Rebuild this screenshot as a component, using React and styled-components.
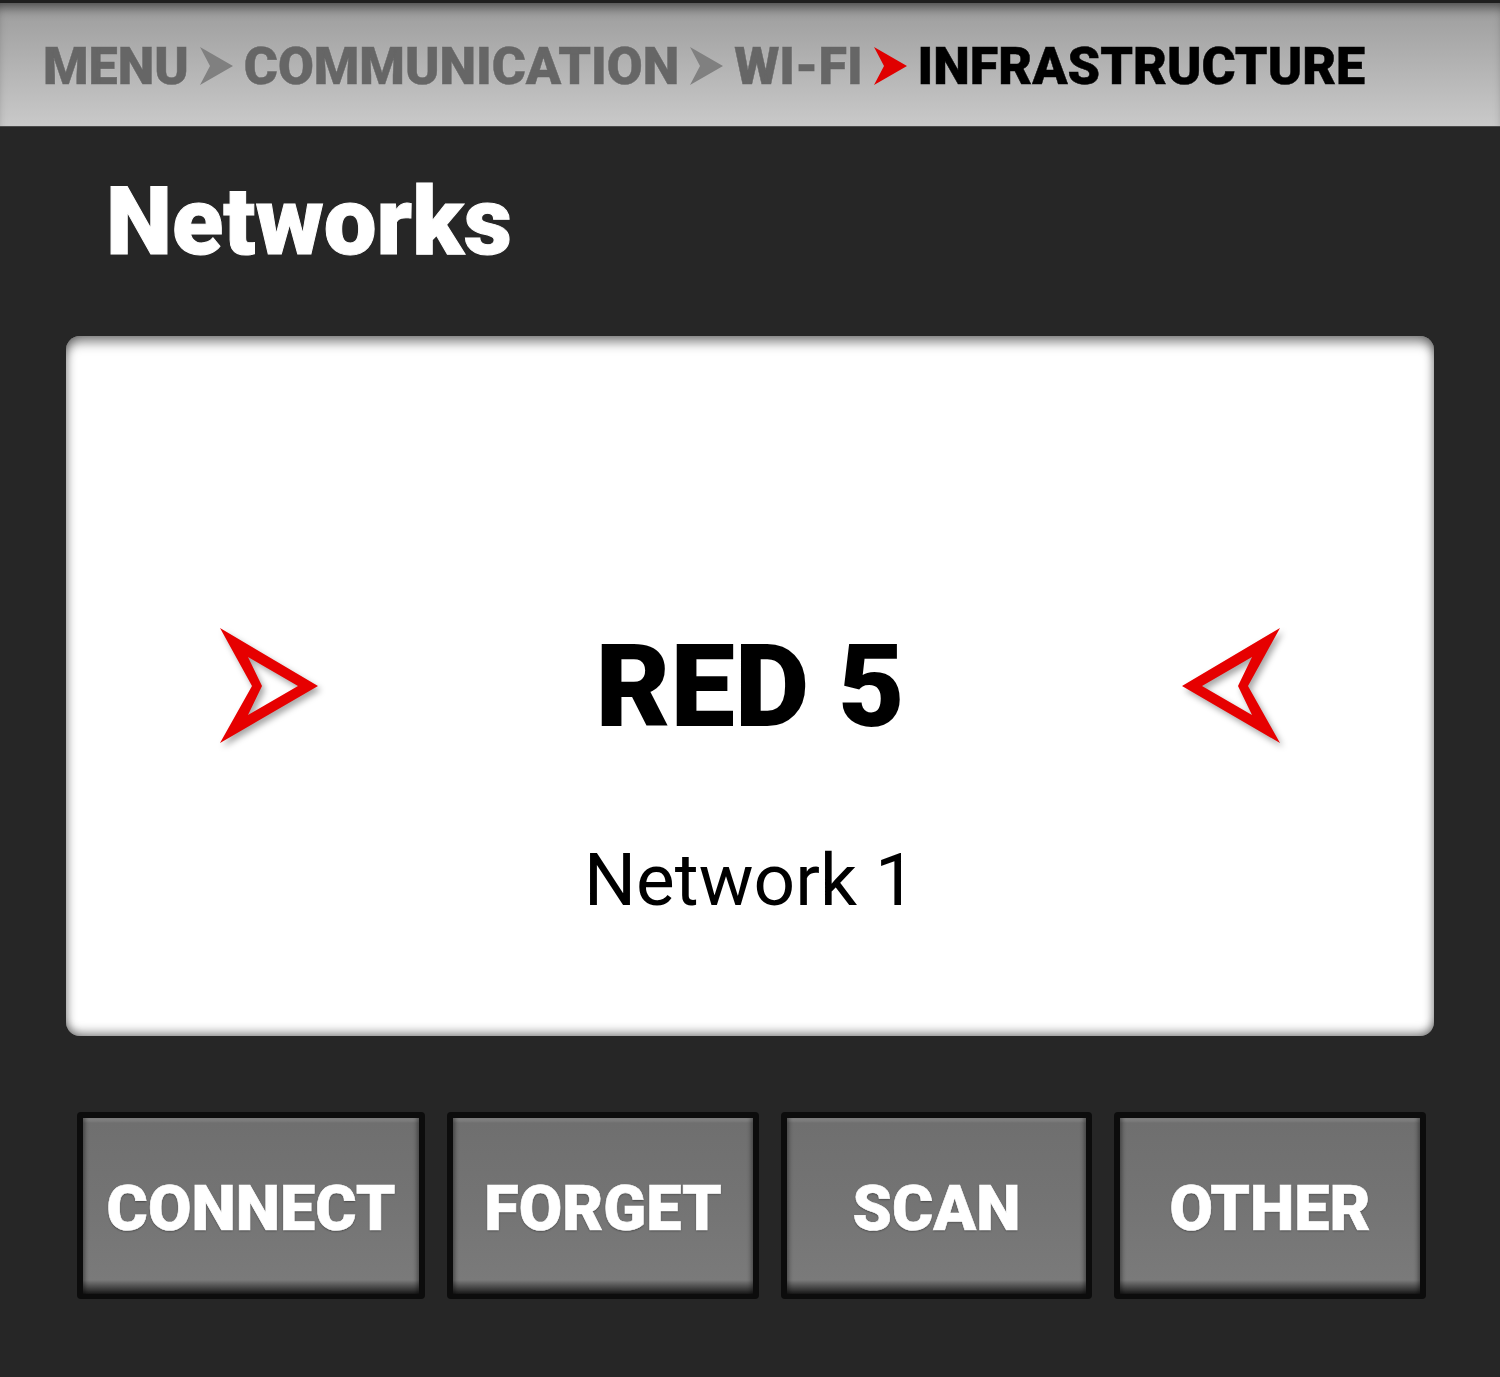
import React from "react";
import styled, { createGlobalStyle } from "styled-components";

const Global = createGlobalStyle`
  html, body {
    margin: 0;
    padding: 0;
    background: #262626;
  }
  body {
    font-family: Roboto, "Liberation Sans", sans-serif;
  }
`;

const S = {
  Screen: styled.div`
    width: 1500px;
    min-height: 1377px;
    background: #262626;
    border-top: 3px solid #1e1e1e;
    box-sizing: border-box;
  `,
  Header: styled.div`
    height: 124px;
    display: flex;
    align-items: center;
    gap: 11px;
    padding: 0 0 0 43px;
    box-sizing: border-box;
    background: linear-gradient(#9c9c9c, #c9c9c9);
    box-shadow: inset 0 10px 12px -6px rgba(0, 0, 0, 0.55);
    border-bottom: 1px solid #4a4a4a;
  `,
  Crumb: styled.span`
    font-size: 52px;
    font-weight: 900;
    line-height: 1;
    color: ${props => (props.current ? "#000" : "#666")};
    text-shadow: 0 0 1px rgba(255, 255, 255, 0.5);
    -webkit-text-stroke: 0.5px currentColor;
    padding-top: 4px;
  `,
  Chevron: styled.svg`
    width: 33px;
    height: 38px;
    flex: none;
    margin-top: 2px;
  `,
  Title: styled.h1`
    margin: 48px 0 0 106px;
    font-size: 94px;
    font-weight: 900;
    line-height: 1;
    color: #fff;
    -webkit-text-stroke: 1px #fff;
  `,
  Card: styled.div`
    margin: 67px 66px 0;
    height: 700px;
    border-radius: 14px;
    background: #fff;
    box-shadow: inset 0 11px 12px -5px rgba(0, 0, 0, 0.5),
      inset 0 -9px 10px -5px rgba(0, 0, 0, 0.4),
      inset 8px 0 9px -5px rgba(0, 0, 0, 0.25),
      inset -8px 0 9px -5px rgba(0, 0, 0, 0.25);
    display: grid;
    grid-template-columns: auto 1fr auto;
    grid-template-rows: 1fr auto 1fr;
    padding: 0 149px;
    box-sizing: border-box;
  `,
  Arrow: styled.svg`
    grid-row: 2;
    width: 110px;
    height: 120px;
    filter: drop-shadow(3px 4px 3px rgba(0, 0, 0, 0.35));
  `,
  Name: styled.div`
    grid-row: 2;
    grid-column: 2;
    align-self: center;
    text-align: center;
    font-size: 115px;
    font-weight: 900;
    line-height: 1;
    color: #000;
  `,
  Sub: styled.div`
    grid-row: 3;
    grid-column: 2;
    align-self: start;
    text-align: center;
    margin-top: 98px;
    font-size: 73px;
    font-weight: 400;
    line-height: 1;
    color: #000;
  `,
  Buttons: styled.div`
    display: grid;
    grid-template-columns: 348px 312px 311px 312px;
    gap: 22px;
    margin: 76px 0 0 77px;
  `,
  Button: styled.div`
    height: 187px;
    box-sizing: border-box;
    padding: 6px 6px 5px;
    border-radius: 4px;
    background: #0c0c0c;
    display: flex;
  `,
  Face: styled.div`
    flex: 1;
    display: flex;
    align-items: center;
    justify-content: center;
    background: linear-gradient(
      #8c8c8c 0px,
      #6f6f6f 5px,
      #747474 50%,
      #7a7a7a calc(100% - 14px),
      #1a1a1a 100%
    );
    box-shadow: inset 4px 0 4px -2px rgba(0, 0, 0, 0.4),
      inset -4px 0 4px -2px rgba(0, 0, 0, 0.4);
    font-size: 63px;
    font-weight: 900;
    color: #fff;
    -webkit-text-stroke: 0.6px #fff;
    text-shadow: 0 1px 2px rgba(0, 0, 0, 0.45);
    padding-top: 4px;
  `
};

const Chevron = ({ color }) => (
  <S.Chevron viewBox="0 0 33 38">
    <polygon points="0,0 33,19 0,38 10,19" fill={color} />
  </S.Chevron>
);

const ArrowHead = ({ flip }) => (
  <S.Arrow viewBox="0 0 110 120">
    <path
      fillRule="evenodd"
      fill="#e60000"
      transform={flip ? "translate(110 0) scale(-1 1)" : undefined}
      d="M5 2 L103 60 L5 117 L37 60 Z M33 31 L83 60 L33 89 L47 60 Z"
    />
  </S.Arrow>
);

const crumbs = ["MENU", "COMMUNICATION", "WI-FI"];
const buttons = ["CONNECT", "FORGET", "SCAN", "OTHER"];

const App = () => (
  <>
    <Global />
    <S.Screen>
      <S.Header>
        {crumbs.map((c, i) => (
          <React.Fragment key={c}>
            <S.Crumb>{c}</S.Crumb>
            <Chevron color={i === crumbs.length - 1 ? "#e00000" : "#808080"} />
          </React.Fragment>
        ))}
        <S.Crumb current>INFRASTRUCTURE</S.Crumb>
      </S.Header>

      <S.Title>Networks</S.Title>

      <S.Card>
        <ArrowHead />
        <S.Name>RED 5</S.Name>
        <S.Sub>Network 1</S.Sub>
        <ArrowHead flip />
      </S.Card>

      <S.Buttons>
        {buttons.map(b => (
          <S.Button key={b}>
            <S.Face>{b}</S.Face>
          </S.Button>
        ))}
      </S.Buttons>
    </S.Screen>
  </>
);

export default App;
